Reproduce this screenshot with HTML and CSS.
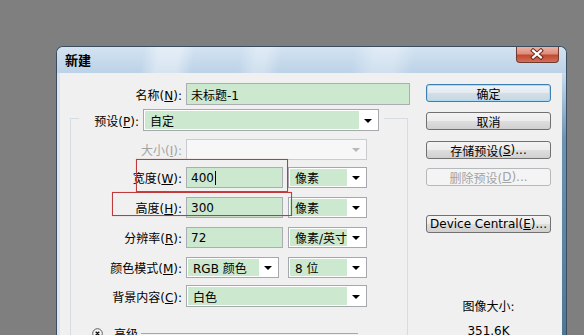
FILE: index.html
```html
<!DOCTYPE html>
<html lang="zh-CN">
<head>
  <meta charset="UTF-8">
  <title>新建</title>
  <link rel="stylesheet" href="styles.css">
</head>
<body>
  <div class="window">
    <div class="titlebar">
      <span class="title">新建</span>
      <span class="close">
        <svg width="43" height="16" viewBox="0 0 43 16">
          <path d="M17.5 4.5 L25.5 11.5 M25.5 4.5 L17.5 11.5" stroke="#6b2418" stroke-width="4.2" stroke-linecap="square"/>
          <path d="M17.5 4.5 L25.5 11.5 M25.5 4.5 L17.5 11.5" stroke="#fff" stroke-width="2.2" stroke-linecap="square"/>
        </svg>
      </span>
    </div>

    <div class="frame">
      <div class="edge"></div>
      <div class="client">
        <div class="form">
          <div class="row">
            <label class="lbl name-lbl">名称(<u>N</u>):</label>
            <div class="input name-input">未标题-1</div>
          </div>

          <fieldset class="group">
            <legend>
              <div class="legend-row">
                <label class="lbl preset-lbl">预设(<u>P</u>):</label>
                <div class="combo preset-combo"><span class="val">自定</span><span class="arrow"></span></div>
              </div>
            </legend>

            <div class="frow size-row">
              <label class="lbl off">大小(<u>I</u>):</label>
              <div class="combo wide off"><span class="val"></span><span class="arrow"></span></div>
            </div>
            <div class="frow w-row">
              <label class="lbl">宽度(<u>W</u>):</label>
              <div class="input num">400<span class="caret"></span></div>
              <div class="combo unit"><span class="val">像素</span><span class="arrow"></span></div>
            </div>
            <div class="frow h-row">
              <label class="lbl">高度(<u>H</u>):</label>
              <div class="input num">300</div>
              <div class="combo unit"><span class="val">像素</span><span class="arrow"></span></div>
            </div>
            <div class="frow res-row">
              <label class="lbl">分辨率(<u>R</u>):</label>
              <div class="input num">72</div>
              <div class="combo unit"><span class="val">像素/英寸</span><span class="arrow"></span></div>
            </div>
            <div class="frow mode-row">
              <label class="lbl">颜色模式(<u>M</u>):</label>
              <div class="combo mode"><span class="val">RGB 颜色</span><span class="arrow"></span></div>
              <div class="combo unit bits"><span class="val">8 位</span><span class="arrow"></span></div>
            </div>
            <div class="frow bg-row">
              <label class="lbl">背景内容(<u>C</u>):</label>
              <div class="combo wide"><span class="val">白色</span><span class="arrow"></span></div>
            </div>

            <div class="adv">
              <svg class="adv-icon" width="11" height="11" viewBox="0 0 11 11">
                <circle cx="5.5" cy="5.5" r="4.8" fill="#f7f7f7" stroke="#5c5c5c"/>
                <path d="M3.7 3.7 L7.3 7.3 M7.3 3.7 L3.7 7.3" stroke="#111" stroke-width="1.3"/>
              </svg>
              <span class="adv-text">高级</span>
              <span class="adv-line"></span>
            </div>
          </fieldset>
        </div>

        <div class="side">
          <div class="btn default">确定</div>
          <div class="btn cancel">取消</div>
          <div class="btn save">存储预设(<u>S</u>)...</div>
          <div class="btn del off">删除预设(<u>D</u>)...</div>
          <div class="btn device">Device Central(<u>E</u>)...</div>
          <div class="info">
            <div>图像大小:</div>
            <div class="info-size">351.6K</div>
          </div>
        </div>

        <div class="mark mark-w"></div>
        <div class="mark mark-h"></div>
      </div>
      <div class="edge edge-r"></div>
    </div>
  </div>
</body>
</html>
```

FILE: styles.css
```css
* {
  box-sizing: border-box;
}

html, body {
  margin: 0;
  height: 100%;
}

body {
  background-color: #7f7f7f;
  overflow: hidden;
  font-family: "DejaVu Sans", "Noto Sans CJK SC", sans-serif;
  font-size: 12px;
  color: #000;
}

u {
  text-decoration: underline;
  text-underline-offset: 1px;
}

/* window chrome */
.window {
  margin: 46px 0 0 56px;
  width: 511px;
  height: 289px;
  border: 1px solid #3b4d5e;
  border-bottom: none;
  border-radius: 7px 7px 0 0;
  display: flex;
  flex-direction: column;
  overflow: hidden;
  background-color: #c9dbec;
}

.titlebar {
  height: 26px;
  display: flex;
  align-items: flex-start;
  padding-left: 8px;
  background:
    linear-gradient(100deg, transparent 0 17%, rgba(255, 255, 255, 0.4) 20% 24%, transparent 27% 36%,
      rgba(255, 255, 255, 0.3) 39% 41%, transparent 44% 58%, rgba(255, 255, 255, 0.3) 62% 66%, transparent 70%),
    linear-gradient(#d3e3f2, #bcd2e7);
}

.title {
  font-family: "Noto Sans CJK SC", sans-serif;
  font-weight: bold;
  font-size: 13px;
  line-height: 26px;
}

.close {
  margin-left: auto;
  margin-right: 7px;
  width: 43px;
  height: 16px;
  border: 1px solid #6e3a32;
  border-top: none;
  border-radius: 0 0 4px 4px;
  background: linear-gradient(#eab2a5 0, #dd8d7b 45%, #c4482f 55%, #d0705a 100%);
  display: flex;
}

.close svg {
  margin: -1px 0 0 -1px;
}

.frame {
  flex: 1;
  display: flex;
  min-height: 0;
}

.edge {
  width: 3px;
  background-color: #dae6f2;
}

.edge-r {
  width: 4px;
  background: linear-gradient(#cadcee 0, #6c93b0 25%, #4f7793 100%);
}

.client {
  flex: 1;
  position: relative;
  display: flex;
  padding-top: 10px;
  overflow: hidden;
  background-color: #f0f0f0;
}

/* form */
.form {
  width: 360px;
}

.row,
.frow {
  display: flex;
  align-items: center;
}

.row {
  height: 22px;
}

.lbl {
  text-align: right;
  margin-right: 4px;
  white-space: nowrap;
}

.name-lbl {
  width: 122px;
}

.off {
  color: #a3a3a3;
}

.input {
  height: 22px;
  border: 1px solid #abadb3;
  background-color: #cce8cf;
  padding-left: 4px;
  display: flex;
  align-items: center;
  white-space: nowrap;
}

.name-input {
  width: 224px;
}

.input.num {
  width: 97px;
  height: 21px;
}

.caret {
  display: inline-block;
  width: 1px;
  height: 14px;
  background-color: #000;
  margin-left: 1px;
}

.combo {
  height: 22px;
  border: 1px solid #a5a9ae;
  background-color: #fff;
  padding: 1px;
  display: flex;
}

.combo .val {
  flex: 1;
  background-color: #cce8cf;
  padding-left: 5px;
  display: flex;
  align-items: center;
  white-space: nowrap;
}

.combo .arrow {
  width: 18px;
  display: flex;
  align-items: center;
  justify-content: center;
}

.combo .arrow::before {
  content: "";
  border-left: 4px solid transparent;
  border-right: 4px solid transparent;
  border-top: 4px solid #000;
  margin-top: 1px;
}

.combo.off {
  border-color: #c9cbce;
  background-color: #f7f7f7;
}

.combo.off .val {
  background-color: #f7f7f7;
}

.combo.off .arrow::before {
  border-top-color: #b8b8b8;
}

.group {
  margin: 4px 0 0 10px;
  width: 338px;
  height: 232px;
  padding: 0;
  min-width: 0;
  border: 1px solid #d5dce3;
  border-bottom: none;
}

.group legend {
  margin-left: 8px;
  padding: 0 5px 0 0;
  height: 18px;
}

.legend-row {
  display: flex;
  align-items: center;
  height: 22px;
}

.preset-lbl {
  width: 60px;
}

.preset-combo {
  width: 236px;
}

.frow {
  height: 21px;
}

.frow .lbl {
  width: 111px;
}

.frow .combo {
  height: 21px;
}

.combo.wide {
  width: 181px;
}

.combo.unit {
  width: 79px;
  margin-left: 5px;
}

.combo.mode {
  width: 93px;
}

.combo.bits {
  margin-left: 9px;
}

.size-row {
  margin-top: 12px;
}

.w-row {
  margin-top: 7px;
}

.h-row,
.res-row,
.mode-row {
  margin-top: 9px;
}

.bg-row {
  margin-top: 7px;
  height: 22px;
}

.bg-row .combo {
  height: 22px;
}

.adv {
  display: flex;
  align-items: center;
  margin: 19px 49px 0 21px;
  height: 14px;
}

.adv-text {
  margin-left: 11px;
}

.adv-line {
  flex: 1;
  height: 1px;
  margin-left: 3px;
  background-color: #a7a7a7;
}

/* buttons column */
.side {
  width: 125px;
  margin-left: 6px;
  padding-top: 1px;
}

.btn {
  height: 18px;
  border: 1px solid #707070;
  border-radius: 3px;
  background: linear-gradient(#f3f3f3 0, #ececec 50%, #dedede 51%, #d0d0d0 100%);
  display: flex;
  align-items: center;
  justify-content: center;
  white-space: nowrap;
}

.btn.default {
  border-color: #3c7fb1;
  box-shadow: inset 0 0 0 1px #a8dcf6;
  background: linear-gradient(#eef3f7 0, #e3ebf1 50%, #d3dee7 51%, #c9d6e1 100%);
}

.btn.off {
  border-color: #b5b9bc;
  background: #f4f4f4;
  color: #a3a3a3;
}

.cancel {
  margin-top: 10px;
}

.save {
  margin-top: 11px;
}

.del {
  margin-top: 9px;
}

.device {
  margin-top: 29px;
}

.info {
  margin-top: 67px;
  text-align: center;
  line-height: 14px;
}

.info-size {
  margin-top: 10px;
}

/* red highlight boxes drawn over the form */
.mark {
  position: absolute;
  border: 1px solid #c0393b;
  box-shadow: 0 0 1px rgba(230, 120, 120, 0.6);
}

.mark-w {
  left: 76px;
  top: 86px;
  width: 152px;
  height: 33px;
}

.mark-h {
  left: 52px;
  top: 119px;
  width: 180px;
  height: 24px;
}
```
